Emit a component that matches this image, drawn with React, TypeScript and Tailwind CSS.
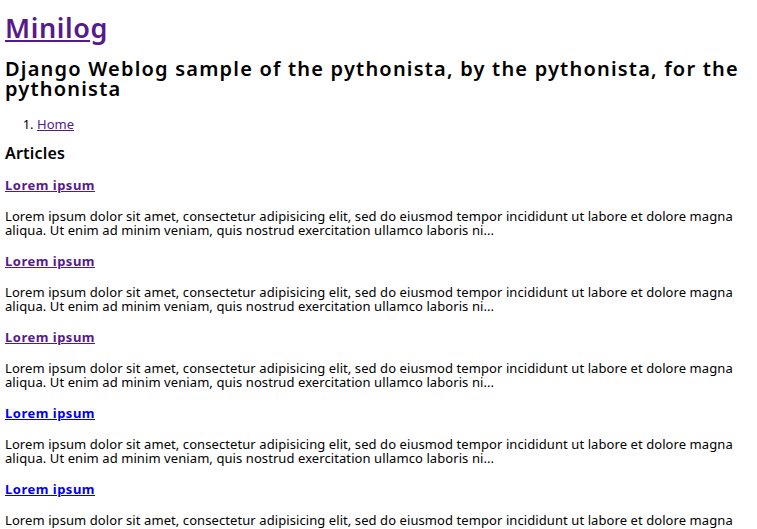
const para =
  "Lorem ipsum dolor sit amet, consectetur adipisicing elit, sed do eiusmod tempor incididunt ut labore et dolore magna aliqua. Ut enim ad minim veniam, quis nostrud exercitation ullamco laboris ni...";

const articles = [
  { visited: true },
  { visited: true },
  { visited: true },
  { visited: false },
  { visited: false },
];

export default function App() {
  return (
    <div className="min-h-[529px] bg-white px-[5px] text-black" style={{ fontFamily: '"Noto Sans", sans-serif' }}>
      <h1 className="pt-[10px] text-[27px] font-semibold leading-[36px] tracking-[0.6px]">
        <a href="#" className="text-[#551a8b] underline">Minilog</a>
      </h1>
      <h2 className="mt-[13px] text-[20px] font-semibold leading-[20px] tracking-[1.2px]">
        Django Weblog sample of the pythonista, by the pythonista, for the pythonista
      </h2>
      <ol className="mt-[17px] list-decimal pl-[32px] text-[13px] leading-[16px]">
        <li>
          <a href="#" className="text-[#551a8b] underline">Home</a>
        </li>
      </ol>
      <h3 className="mt-[11px] text-[16px] font-semibold leading-[20px] tracking-[0.2px]">Articles</h3>
      {articles.map((a, i) => (
        <div key={i}>
          <h4 className={i === 0 ? "mt-[14px] text-[13px] font-bold leading-[16px] tracking-[0.5px]" : "mt-[16px] text-[13px] font-bold leading-[16px] tracking-[0.5px]"}>
            <a href="#" className={a.visited ? "text-[#551a8b] underline" : "text-[#0000ee] underline"}>
              Lorem ipsum
            </a>
          </h4>
          <p className="mt-[16px] text-[13px] leading-[14px] tracking-[0.08px]">{para}</p>
        </div>
      ))}
    </div>
  );
}
